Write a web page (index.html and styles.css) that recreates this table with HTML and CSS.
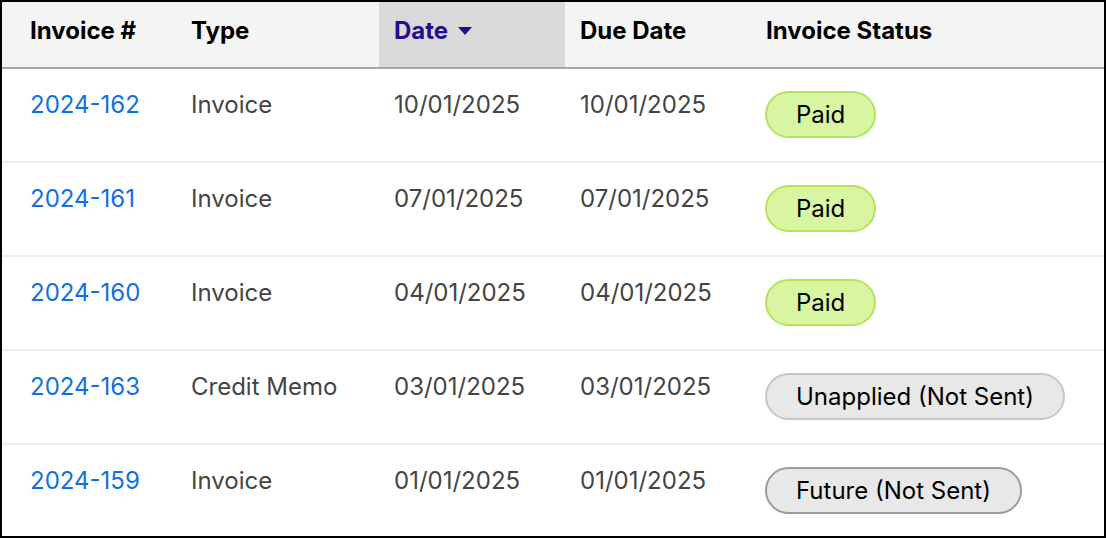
FILE: index.html
```html
<!DOCTYPE html>
<html>
<head>
  <meta charset="utf-8">
  <link rel="stylesheet" href="styles.css">
</head>
<body>
  <div class="invoice-panel">
    <table class="invoice-table">
      <colgroup>
        <col class="col-num">
        <col class="col-type">
        <col class="col-date">
        <col class="col-due">
        <col class="col-status">
      </colgroup>
      <thead>
        <tr>
          <th>Invoice #</th>
          <th>Type</th>
          <th class="sorted">Date <span class="sort-arrow"></span></th>
          <th>Due Date</th>
          <th>Invoice Status</th>
        </tr>
      </thead>
      <tbody>
        <tr>
          <td><a href="#">2024-162</a></td>
          <td>Invoice</td>
          <td>10/01/2025</td>
          <td>10/01/2025</td>
          <td><span class="badge paid">Paid</span></td>
        </tr>
        <tr>
          <td><a href="#">2024-161</a></td>
          <td>Invoice</td>
          <td>07/01/2025</td>
          <td>07/01/2025</td>
          <td><span class="badge paid">Paid</span></td>
        </tr>
        <tr>
          <td><a href="#">2024-160</a></td>
          <td>Invoice</td>
          <td>04/01/2025</td>
          <td>04/01/2025</td>
          <td><span class="badge paid">Paid</span></td>
        </tr>
        <tr>
          <td><a href="#">2024-163</a></td>
          <td>Credit Memo</td>
          <td>03/01/2025</td>
          <td>03/01/2025</td>
          <td><span class="badge unapplied">Unapplied (Not Sent)</span></td>
        </tr>
        <tr>
          <td><a href="#">2024-159</a></td>
          <td>Invoice</td>
          <td>01/01/2025</td>
          <td>01/01/2025</td>
          <td><span class="badge future">Future (Not Sent)</span></td>
        </tr>
      </tbody>
    </table>
  </div>
</body>
</html>
```

FILE: styles.css
```css
html, body {
  margin: 0;
  padding: 0;
  background: white;
}
body {
  font-family: Inter, 'Noto Sans', sans-serif;
}
.invoice-panel {
  width: 1106px;
  height: 538px;
  box-sizing: border-box;
  border: 2px solid #000;
  overflow: hidden;
}
.invoice-table {
  width: 100%;
  border-collapse: collapse;
  table-layout: fixed;
  font-size: 24px;
}
.col-num { width: 174px; }
.col-type { width: 203px; }
.col-date { width: 186px; }
.col-due { width: 186px; }
.invoice-table th {
  text-align: left;
  font-weight: 700;
  color: #000;
  background: #f4f4f4;
  height: 65px;
  box-sizing: border-box;
  padding: 14px 15px 22px 15px;
  line-height: normal;
  vertical-align: top;
  border-bottom: 2px solid #a6a6a6;
  white-space: nowrap;
}
.invoice-table th.sorted {
  background: #d9d9d9;
  color: #2a0a8c;
}
.sort-arrow {
  display: inline-block;
  width: 0;
  height: 0;
  border-left: 7px solid transparent;
  border-right: 7px solid transparent;
  border-top: 8px solid #2a0a8c;
  margin-left: 4px;
  vertical-align: 4px;
}
.invoice-table td {
  color: #444;
  padding: 21px 15px 21px 15px;
  vertical-align: top;
  line-height: normal;
  border-bottom: 2px solid #eeeeee;
  white-space: nowrap;
}
.invoice-table tbody tr:last-child td {
  border-bottom: none;
}
.invoice-table th:first-child,
.invoice-table td:first-child {
  padding-left: 28px;
}
.invoice-table a {
  color: #1170e0;
  text-decoration: none;
}
.invoice-table td:last-child {
  padding-left: 14px;
}
.badge {
  display: inline-block;
  margin: 1px 0 2px 0;
  padding: 7px 29px;
  border-radius: 24px;
  border: 2px solid #c8c8c8;
  background: #e8e8e8;
  color: #000;
}
.badge.paid {
  background: #d8f5a2;
  border-color: #b4e35e;
}
.badge.unapplied {
  border-color: #c6c6c6;
}
.badge.future {
  border-color: #9c9c9c;
}
```
